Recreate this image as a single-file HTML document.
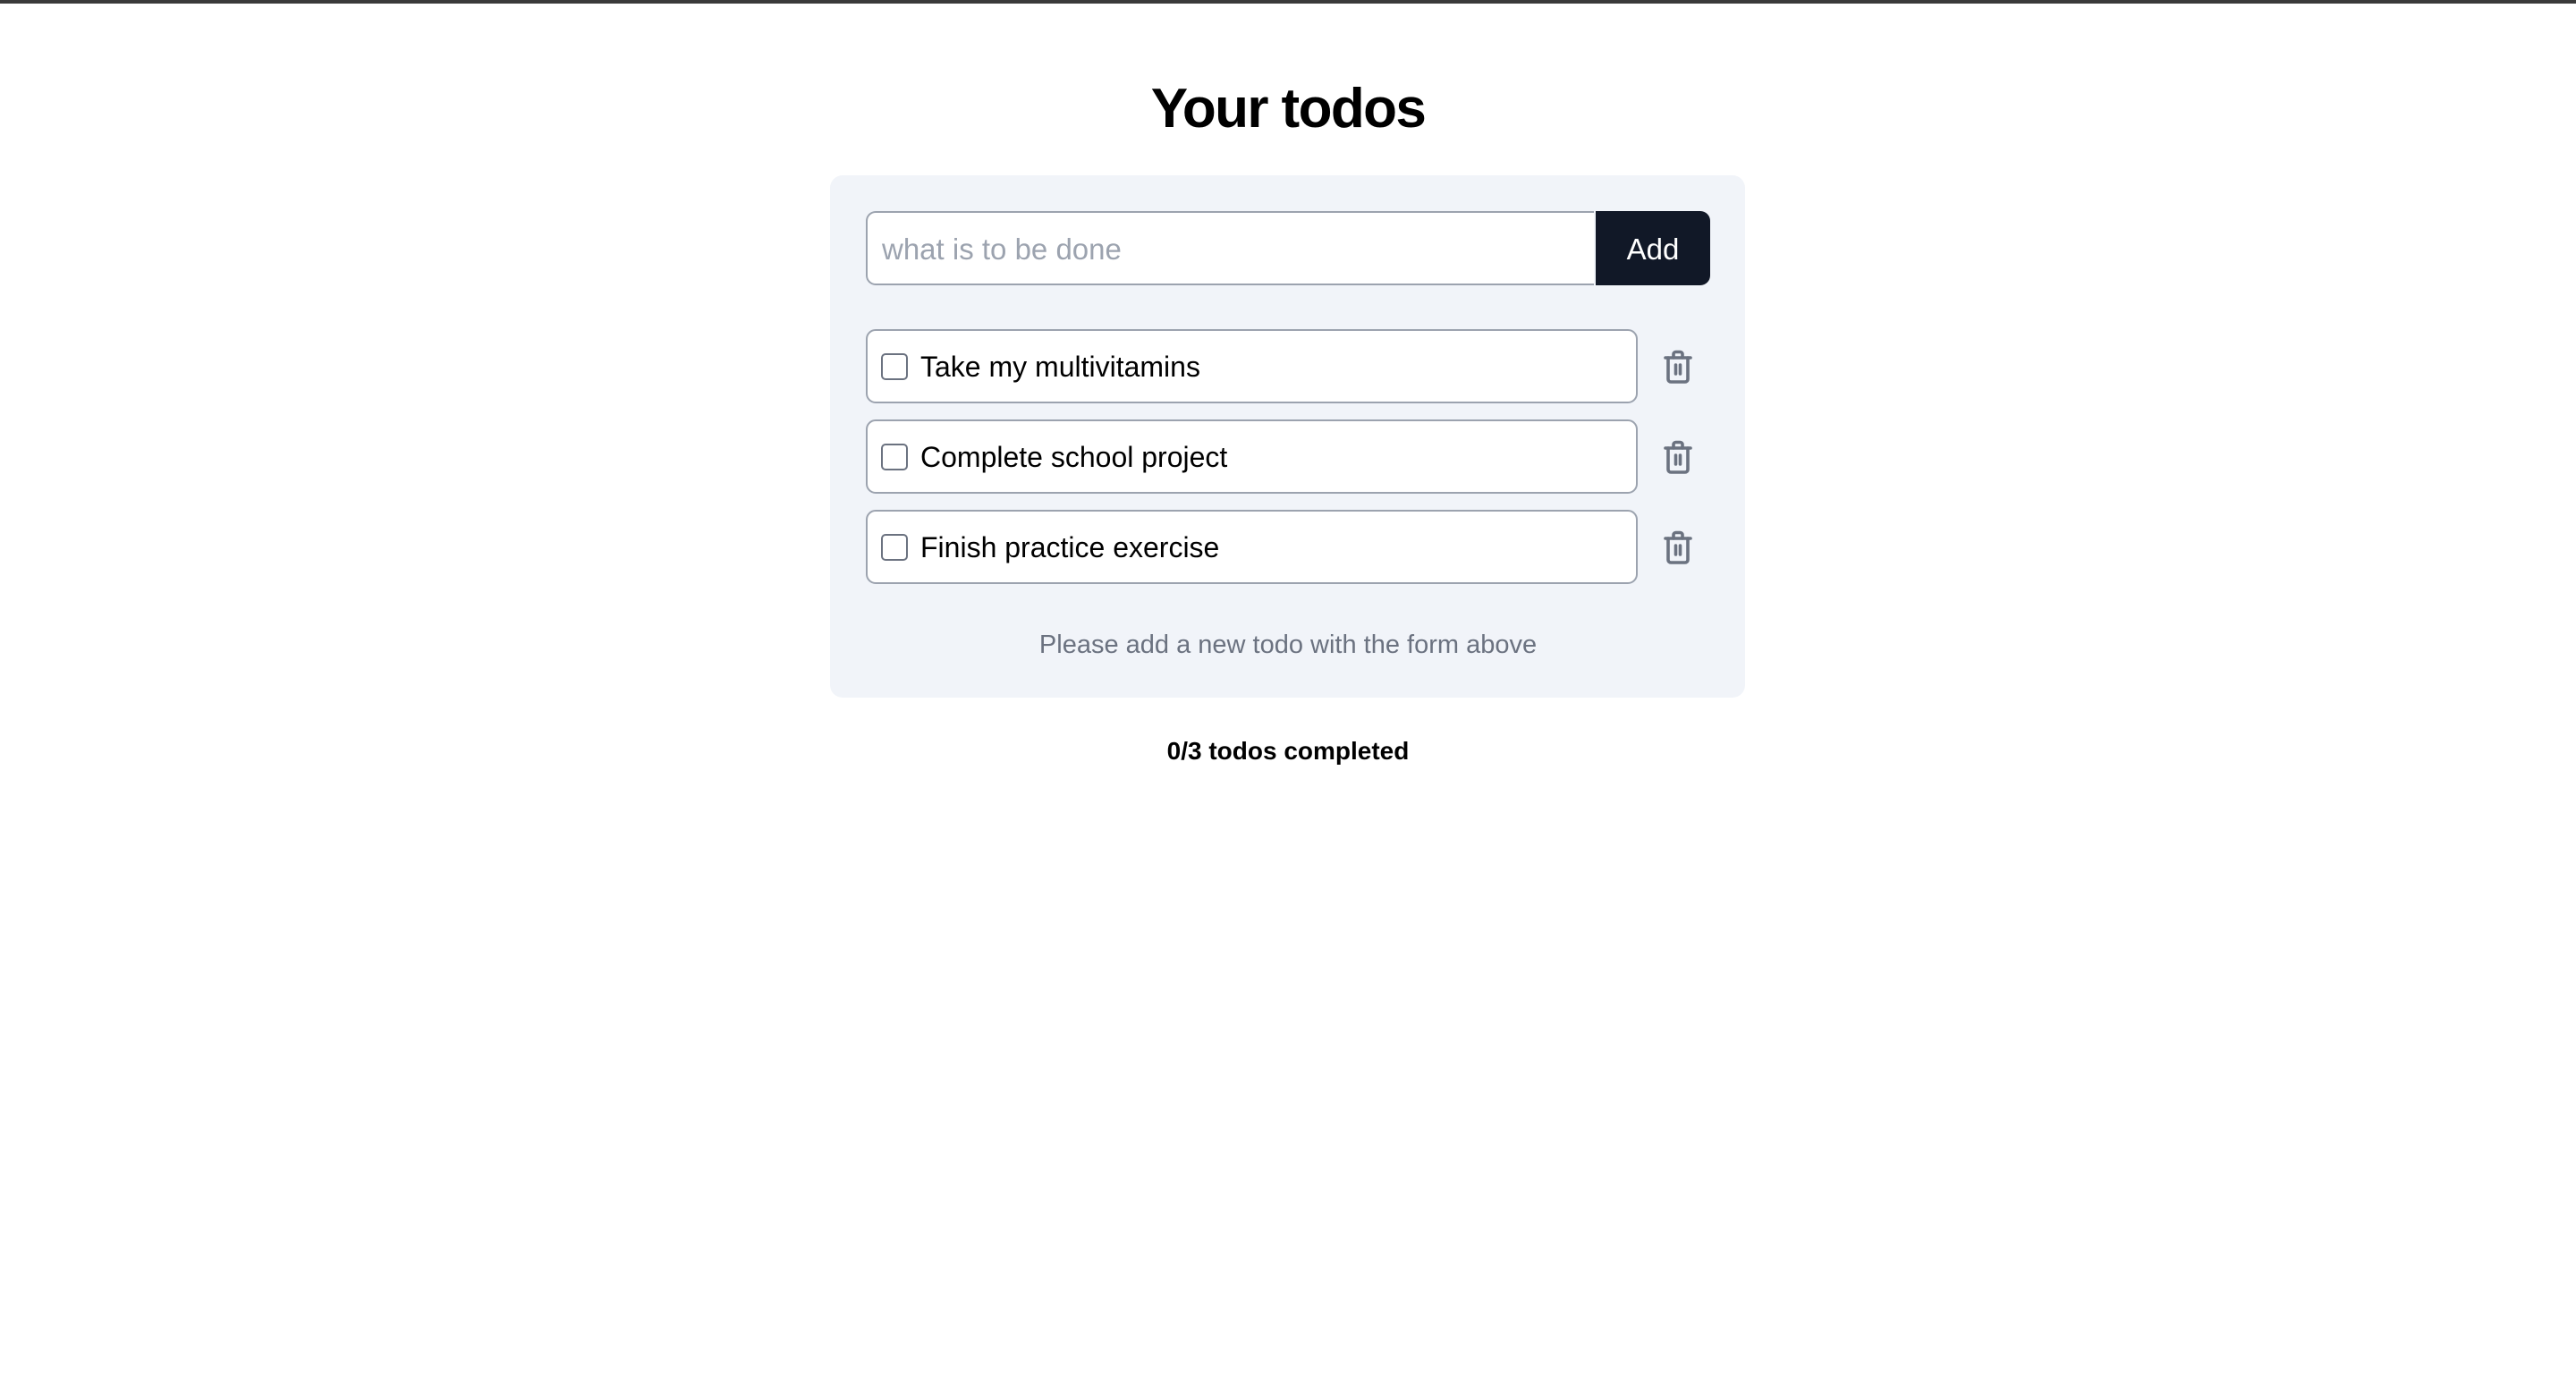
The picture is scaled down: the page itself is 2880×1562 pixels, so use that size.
<!DOCTYPE html>
<html><head><meta charset="utf-8"><style>
html,body{margin:0;padding:0;background:#fff;}
body{width:2880px;height:1562px;position:relative;overflow:hidden;font-family:"Liberation Sans",Arial,sans-serif;}
.topbar{position:absolute;left:0;top:0;width:2880px;height:4px;background:#3a3a3a;}
h1{position:absolute;left:0;width:2880px;top:79px;margin:0;text-align:center;font-size:62px;font-weight:700;color:#000;line-height:86px;letter-spacing:-1.6px;}
.panel{position:absolute;left:928px;top:196px;width:1023px;height:584px;background:#f1f4f9;border-radius:14px;}
.input{position:absolute;left:968px;top:236px;width:812px;height:79px;background:#fff;border:2px solid #9ca3af;border-right:none;border-radius:11px 0 0 11px;}
.input span{position:absolute;left:16px;top:1px;line-height:79px;font-size:33px;color:#9ca3af;}
.add{position:absolute;left:1784px;top:236px;width:128px;height:83px;background:#111827;border-radius:0 11px 11px 0;color:#fff;font-size:33px;line-height:85px;text-align:center;}
.item{position:absolute;left:968px;width:859px;height:79px;background:#fff;border:2px solid #9ca3af;border-radius:11px;}
.cb{position:absolute;left:15px;top:25px;width:26px;height:26px;border:2px solid #6b7280;border-radius:5px;background:#fff;}
.item span{position:absolute;left:59px;top:1px;line-height:79px;font-size:32px;color:#000;}
.trash{position:absolute;left:1860px;width:32px;height:38px;}
.help{position:absolute;left:0;width:2880px;top:701px;text-align:center;font-size:29px;color:#6b7280;line-height:40px;}
.done{position:absolute;left:0;width:2880px;top:820px;text-align:center;font-size:28px;font-weight:700;color:#000;line-height:40px;}
</style></head><body>
<div class="topbar"></div>
<h1>Your todos</h1>
<div class="panel"></div>
<div class="input"><span>what is to be done</span></div>
<div class="add">Add</div>

<div class="item" style="top:368px"><div class="cb"></div><span>Take my multivitamins</span></div>
<div class="item" style="top:469px"><div class="cb"></div><span>Complete school project</span></div>
<div class="item" style="top:570px"><div class="cb"></div><span>Finish practice exercise</span></div>

<svg class="trash" style="top:391px" viewBox="0 0 32 38" fill="none" stroke="#6b7280" stroke-width="3.6" stroke-linecap="round" stroke-linejoin="round"><path d="M2 9H30"/><path d="M11 9V5a2.5 2.5 0 0 1 2.5-2.5h5a2.5 2.5 0 0 1 2.5 2.5v4"/><path d="M5 9V33a3 3 0 0 0 3 3h16a3 3 0 0 0 3-3V9"/><path d="M13.5 17V27M18.5 17V27"/></svg>
<svg class="trash" style="top:492px" viewBox="0 0 32 38" fill="none" stroke="#6b7280" stroke-width="3.6" stroke-linecap="round" stroke-linejoin="round"><path d="M2 9H30"/><path d="M11 9V5a2.5 2.5 0 0 1 2.5-2.5h5a2.5 2.5 0 0 1 2.5 2.5v4"/><path d="M5 9V33a3 3 0 0 0 3 3h16a3 3 0 0 0 3-3V9"/><path d="M13.5 17V27M18.5 17V27"/></svg>
<svg class="trash" style="top:593px" viewBox="0 0 32 38" fill="none" stroke="#6b7280" stroke-width="3.6" stroke-linecap="round" stroke-linejoin="round"><path d="M2 9H30"/><path d="M11 9V5a2.5 2.5 0 0 1 2.5-2.5h5a2.5 2.5 0 0 1 2.5 2.5v4"/><path d="M5 9V33a3 3 0 0 0 3 3h16a3 3 0 0 0 3-3V9"/><path d="M13.5 17V27M18.5 17V27"/></svg>

<div class="help">Please add a new todo with the form above</div>
<div class="done">0/3 todos completed</div>
</body></html>
